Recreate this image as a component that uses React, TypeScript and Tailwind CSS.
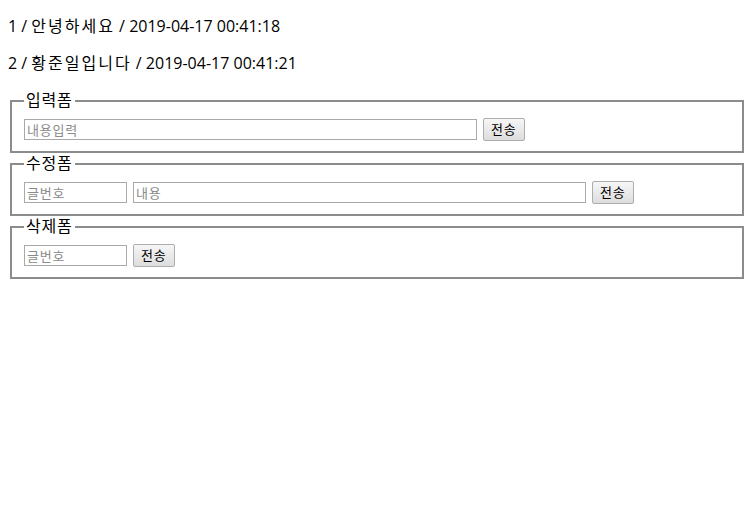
import React, { useState } from 'react';

const font = { fontFamily: '"Open Sans", "Noto Sans CJK KR", sans-serif' };

const inputCls =
  'h-[21px] border border-[#a9a9a9] bg-white px-[2px] text-[13px] leading-[17px] tracking-[0.8px] text-black placeholder:text-[#8a8a8a] outline-none';

const btnCls =
  'h-[23px] rounded-[2px] border border-[#adadad] bg-gradient-to-b from-[#f6f6f6] to-[#dddddd] px-[7px] text-[13px] leading-[19px] tracking-[0.8px] text-black';

const posts = [
  { no: 1, text: '안녕하세요', date: '2019-04-17 00:41:18' },
  { no: 2, text: '황준일입니다', date: '2019-04-17 00:41:21' },
];

const Form = ({ title, children }: { title: string; children: React.ReactNode }) => (
  <fieldset className="mx-[2px] border-2 border-solid border-[#8c8c8c] px-[12px] pb-[10px] pt-[7px]">
    <legend className="px-[2px] text-[16px] leading-[21px] tracking-[0.8px] text-black">{title}</legend>
    <div className="flex items-center gap-[6px]">{children}</div>
  </fieldset>
);

const App = () => {
  const [content, setContent] = useState('');

  return (
    <div className="min-h-[516px] bg-white p-[8px] text-black" style={font}>
      {posts.map((p) => (
        <p key={p.no} className="my-[16px] text-[16px] leading-[21px] first:mt-[8px]">
          {p.no} / <span className="tracking-[2px]">{p.text}</span> / {p.date}
        </p>
      ))}

      <Form title="입력폼">
        <input
          className={`${inputCls} w-[453px]`}
          placeholder="내용입력"
          value={content}
          onChange={(e) => setContent(e.target.value)}
        />
        <button className={btnCls}>전송</button>
      </Form>

      <Form title="수정폼">
        <input className={`${inputCls} w-[103px]`} placeholder="글번호" />
        <input className={`${inputCls} w-[453px]`} placeholder="내용" />
        <button className={btnCls}>전송</button>
      </Form>

      <Form title="삭제폼">
        <input className={`${inputCls} w-[103px]`} placeholder="글번호" />
        <button className={btnCls}>전송</button>
      </Form>
    </div>
  );
};

export default App;
